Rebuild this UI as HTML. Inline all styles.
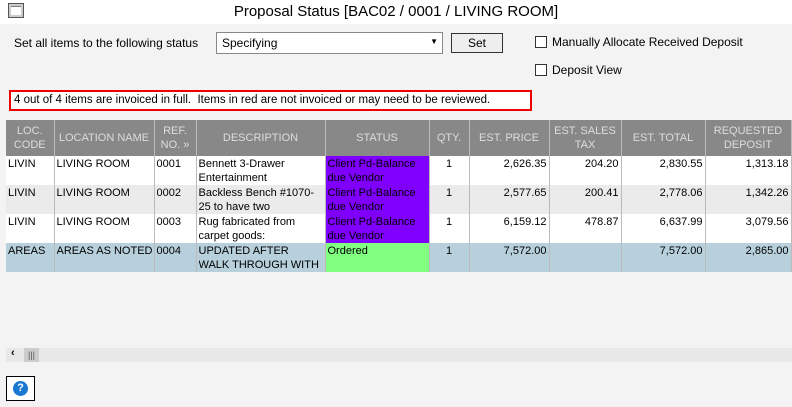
<!DOCTYPE html><html><head><style>
body{margin:0;width:792px;height:407px;background:#f3f3f3;font-family:"Liberation Sans",sans-serif;font-size:12px;color:#000;position:relative;overflow:hidden}
.a{position:absolute}
table{border-collapse:collapse;table-layout:fixed;position:absolute;left:6px;top:120px;width:785px}
th{background:#888;color:#ddd;font-weight:normal;font-size:11px;height:36px;border-right:1px solid #bbb;padding:0;line-height:14px;overflow:hidden}
td{vertical-align:top;padding:0 2px;border-right:1px solid #bbb;line-height:14px;overflow:hidden;white-space:nowrap;font-size:11px}
td>div{height:28px;padding-top:1px;overflow:hidden}
td.w{white-space:normal}
tr.g td{background:#ebebeb}tr.b td{background:#b8d0dc}tr.w td{background:#fff}
td.r{text-align:right}td.c{text-align:center}
td.p{background:#8000ff!important}td.gr{background:#80ff80!important}
.cb{width:10px;height:10px;border:1px solid #333;background:#fff}
</style></head><body>
<div class="a" style="left:0;top:0;width:792px;height:24px;background:#fff"></div>
<div class="a" style="left:8px;top:3px;width:14px;height:13px;border:1px solid #555;background:#ccc"><div style="margin:2px;height:8px;background:#fff;border-top:1px solid #777"></div></div>
<div class="a" style="left:0;top:3px;width:792px;text-align:center;font-size:15px">Proposal Status [BAC02 / 0001 / LIVING ROOM]</div>
<div class="a" style="left:14px;top:36px">Set all items to the following status</div>
<div class="a" style="left:216px;top:32px;width:225px;height:20px;border:1px solid #888;background:#fff"><span style="position:absolute;left:5px;top:3px">Specifying</span><span style="position:absolute;right:4px;top:4px;font-size:8px">▼</span></div>
<div class="a" style="left:451px;top:33px;width:50px;height:18px;border:1px solid #333;background:#eee;text-align:center;line-height:18px">Set</div>
<div class="a cb" style="left:535px;top:36px"></div><div class="a" style="left:552px;top:35px">Manually Allocate Received Deposit</div>
<div class="a cb" style="left:535px;top:64px"></div><div class="a" style="left:552px;top:63px">Deposit View</div>
<div class="a" style="left:9px;top:90px;width:516px;height:17px;border:2px solid #e00;background:#fff;line-height:17px;padding-left:3px;font-size:11.5px">4 out of 4 items are invoiced in full.&nbsp; Items in red are not invoiced or may need to be reviewed.</div>
<table>
<colgroup><col style="width:48px"><col style="width:100px"><col style="width:42px"><col style="width:129px"><col style="width:104px"><col style="width:40px"><col style="width:80px"><col style="width:72px"><col style="width:84px"><col style="width:86px"></colgroup>
<tr><th>LOC.<br>CODE</th><th>LOCATION NAME</th><th>REF.<br>NO. »</th><th>DESCRIPTION</th><th>STATUS</th><th>QTY.</th><th>EST. PRICE</th><th>EST. SALES<br>TAX</th><th>EST. TOTAL</th><th>REQUESTED<br>DEPOSIT</th></tr>
<tr class="w"><td><div>LIVIN</div></td><td><div>LIVING ROOM</div></td><td><div>0001</div></td><td class="w"><div>Bennett 3-Drawer Entertainment</div></td><td class="p w"><div>Client Pd-Balance due Vendor</div></td><td class="c"><div>1</div></td><td class="r"><div>2,626.35</div></td><td class="r"><div>204.20</div></td><td class="r"><div>2,830.55</div></td><td class="r"><div>1,313.18</div></td></tr>
<tr class="g"><td><div>LIVIN</div></td><td><div>LIVING ROOM</div></td><td><div>0002</div></td><td class="w"><div>Backless Bench #1070-25 to have two</div></td><td class="p w"><div>Client Pd-Balance due Vendor</div></td><td class="c"><div>1</div></td><td class="r"><div>2,577.65</div></td><td class="r"><div>200.41</div></td><td class="r"><div>2,778.06</div></td><td class="r"><div>1,342.26</div></td></tr>
<tr class="w"><td><div>LIVIN</div></td><td><div>LIVING ROOM</div></td><td><div>0003</div></td><td class="w"><div>Rug fabricated from carpet goods:</div></td><td class="p w"><div>Client Pd-Balance due Vendor</div></td><td class="c"><div>1</div></td><td class="r"><div>6,159.12</div></td><td class="r"><div>478.87</div></td><td class="r"><div>6,637.99</div></td><td class="r"><div>3,079.56</div></td></tr>
<tr class="b"><td><div>AREAS</div></td><td><div>AREAS AS NOTED</div></td><td><div>0004</div></td><td class="w"><div>UPDATED AFTER WALK THROUGH WITH</div></td><td class="gr"><div>Ordered</div></td><td class="c"><div>1</div></td><td class="r"><div>7,572.00</div></td><td class="r"><div></div></td><td class="r"><div>7,572.00</div></td><td class="r"><div>2,865.00</div></td></tr>
</table>
<div class="a" style="left:6px;top:348px;width:786px;height:14px;background:#e8e8e8"></div>
<div class="a" style="left:11px;top:347px;font-size:11px;font-weight:bold">‹</div>
<div class="a" style="left:24px;top:348px;width:15px;height:14px;background:#ccc;font-size:9px;text-align:center;line-height:14px;color:#555">|||</div>
<div class="a" style="left:6px;top:376px;width:27px;height:23px;border:1px solid #000;background:#fff"><div style="margin:4px auto;width:15px;height:15px;border-radius:50%;background:#1a78d0;color:#fff;font-weight:bold;font-size:11px;text-align:center;line-height:15px">?</div></div>
</body></html>
